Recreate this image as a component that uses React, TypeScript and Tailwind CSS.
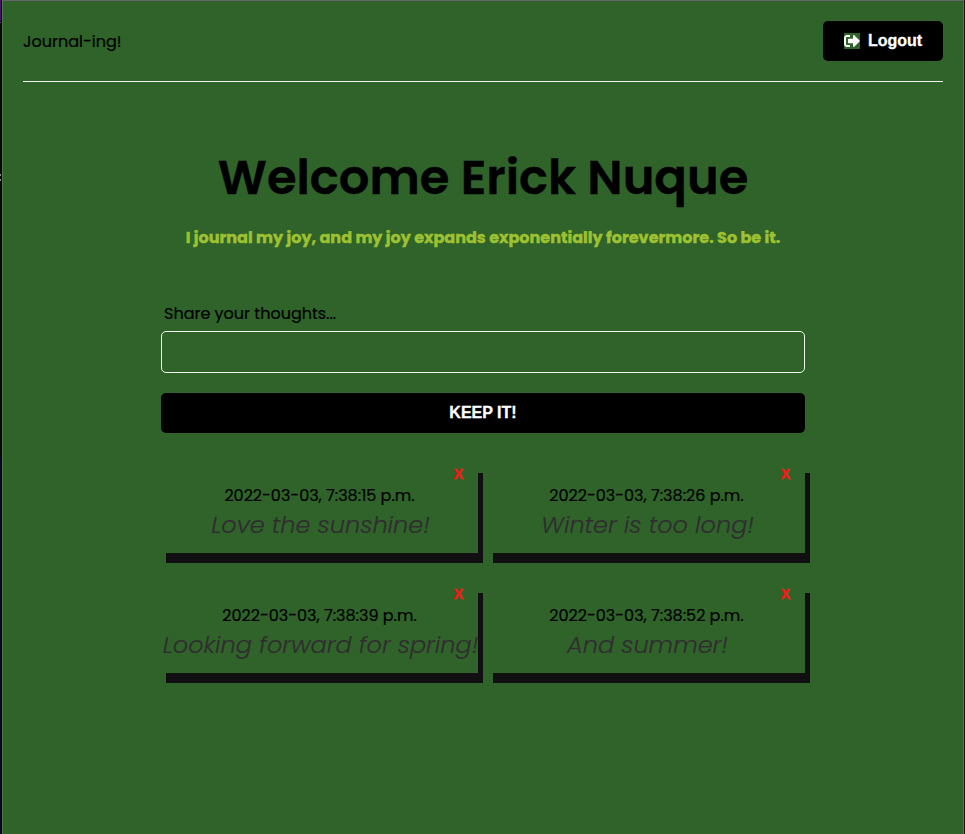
import { FaSignOutAlt } from "react-icons/fa";

const entries = [
  { date: "2022-03-03, 7:38:15 p.m.", text: "Love the sunshine!" },
  { date: "2022-03-03, 7:38:26 p.m.", text: "Winter is too long!" },
  { date: "2022-03-03, 7:38:39 p.m.", text: "Looking forward for spring!" },
  { date: "2022-03-03, 7:38:52 p.m.", text: "And summer!" },
];

export default function App() {
  return (
    <div className="flex h-[834px] w-[965px] overflow-hidden border-r border-r-[#15151a] bg-[#2f6329] font-[Poppins,sans-serif] text-[16px] text-black">
      <div className="flex w-0.5 shrink-0 flex-col bg-[#08060c]">
        <div className="h-[21px] w-px bg-[#451263]" />
        <div className="mt-px h-px w-px bg-[#55505a]" />
        <div className="mt-[151px] h-0.5 w-px bg-[#8a8a8a]" />
        <div className="mt-[3px] h-0.5 w-px bg-[#8a8a8a]" />
        <div className="mt-auto h-[375px] w-px bg-[#0c0824]" />
      </div>
      <div className="flex h-full flex-1 flex-col border-x border-t border-x-[#4d7848] border-t-[#66666a] px-5">
        <header className="flex h-[81px] shrink-0 items-center justify-between border-b border-[#f0f5ee]">
          <span className="pt-0.5 whitespace-nowrap [-webkit-text-stroke:0.2px_black]">Journal-ing!</span>
          <button className="flex h-10 w-[120px] items-center justify-center gap-2 rounded-[5px] bg-black font-['Liberation_Sans',Arial,sans-serif] font-bold text-white [-webkit-text-stroke:0.3px_white]">
            <span className="flex size-4 items-center justify-center bg-[#2f6329]">
              <FaSignOutAlt className="size-4" />
            </span>
            Logout
          </button>
        </header>
        <main className="mx-auto flex w-[644px] flex-col">
          <h1 className="mt-[60px] text-center text-[48px] leading-[72px] font-semibold whitespace-nowrap [-webkit-text-stroke:0.4px_black]">
            Welcome Erick Nuque
          </h1>
          <p className="mt-3 text-center leading-6 font-bold whitespace-nowrap text-[#9ec132] [-webkit-text-stroke:0.4px_#9ec132]">
            I journal my joy, and my joy expands exponentially forevermore. So be it.
          </p>
          <label className="mt-[52px] pl-[3px] leading-6 [-webkit-text-stroke:0.2px_black]">Share your thoughts...</label>
          <input className="mt-[5px] h-[42px] w-full rounded-[5px] border border-[#f0f5ee] px-3 outline-none" />
          <button className="mt-5 h-10 rounded-[5px] bg-black font-['Liberation_Sans',Arial,sans-serif] font-bold text-white [-webkit-text-stroke:0.3px_white]">
            KEEP IT!
          </button>
          <section className="mt-[30px] grid grid-cols-2 gap-x-[10px] gap-y-[30px]">
            {entries.map((e) => (
              <article key={e.date} className="flex h-[90px] flex-col items-center bg-[#2f6329] shadow-[5px_10px_0_#110f11]">
                <button className="mr-[15px] h-[21px] self-end font-['Liberation_Sans',Arial,sans-serif] text-[14px] leading-[22px] font-bold text-[#f41b1b] [-webkit-text-stroke:0.5px_#f41b1b]">
                  X
                </button>
                <time className="leading-6 whitespace-nowrap [-webkit-text-stroke:0.2px_black]">{e.date}</time>
                <p className="-mt-px pl-0.5 text-[24px] leading-9 font-light whitespace-nowrap text-[#302d30] italic [-webkit-text-stroke:0.2px_#302d30]">
                  {e.text}
                </p>
              </article>
            ))}
          </section>
        </main>
      </div>
    </div>
  );
}
